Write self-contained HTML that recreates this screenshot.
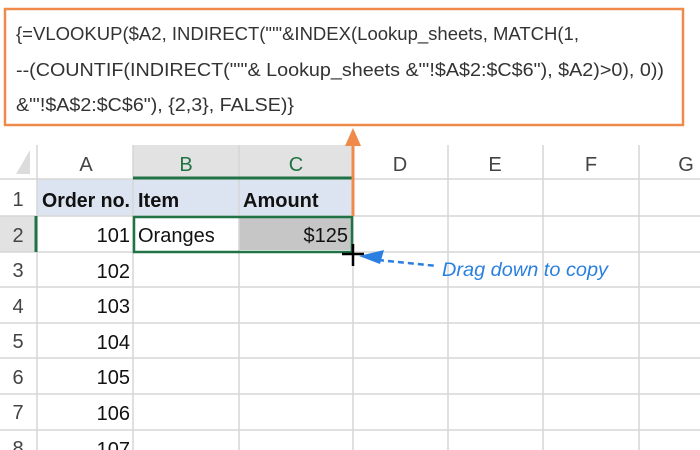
<!DOCTYPE html>
<html><head><meta charset="utf-8"><style>
html,body{margin:0;padding:0;background:#fff;width:700px;height:450px;overflow:hidden}
svg{display:block}
text{font-family:"Liberation Sans",sans-serif}
</style></head><body>
<svg width="700" height="450" viewBox="0 0 700 450">
<rect x="133" y="145" width="220" height="34" fill="#e2e2e2"/>
<rect x="0" y="216" width="37" height="36" fill="#e2e2e2"/>
<rect x="37" y="179" width="316" height="37" fill="#dde4f1"/>
<rect x="239" y="218" width="112" height="32" fill="#c6c6c6"/>
<g stroke="#d6d6d6" stroke-width="1.5">
<line x1="0" y1="179" x2="700" y2="179"/>
<line x1="0" y1="216" x2="700" y2="216"/>
<line x1="0" y1="252" x2="700" y2="252"/>
<line x1="0" y1="287" x2="700" y2="287"/>
<line x1="0" y1="323" x2="700" y2="323"/>
<line x1="0" y1="358" x2="700" y2="358"/>
<line x1="0" y1="394" x2="700" y2="394"/>
<line x1="0" y1="430" x2="700" y2="430"/>
<line x1="37" y1="145" x2="37" y2="450"/>
<line x1="133" y1="145" x2="133" y2="450"/>
<line x1="239" y1="145" x2="239" y2="450"/>
<line x1="353" y1="145" x2="353" y2="450"/>
<line x1="448" y1="145" x2="448" y2="450"/>
<line x1="543" y1="145" x2="543" y2="450"/>
<line x1="639" y1="145" x2="639" y2="450"/>
</g>
<polygon points="30,150 30,174 16,174" fill="#dcdcdc"/>
<line x1="133" y1="178" x2="353" y2="178" stroke="#217346" stroke-width="3"/>
<line x1="36" y1="216" x2="36" y2="252" stroke="#217346" stroke-width="3"/>
<rect x="134" y="217" width="218" height="35" fill="none" stroke="#217346" stroke-width="2.5"/>
<g font-size="20" fill="#444" text-anchor="middle">
<text x="86" y="171">A</text><text x="186" y="171" fill="#217346">B</text><text x="296" y="171" fill="#217346">C</text>
<text x="400" y="171">D</text><text x="495" y="171">E</text><text x="591" y="171">F</text><text x="686" y="171">G</text>
<text x="18" y="206">1</text><text x="18" y="242">2</text><text x="18" y="277">3</text><text x="18" y="313">4</text>
<text x="18" y="348">5</text><text x="18" y="384">6</text><text x="18" y="419">7</text><text x="18" y="455">8</text>
</g>
<g font-size="20" fill="#111">
<text x="42" y="207" font-weight="bold" textLength="88" lengthAdjust="spacingAndGlyphs">Order no.</text>
<text x="138" y="207" font-weight="bold">Item</text>
<text x="243" y="207" font-weight="bold">Amount</text>
<text x="138" y="242">Oranges</text>
<g text-anchor="end">
<text x="348" y="242">$125</text>
<text x="130" y="242">101</text><text x="130" y="278">102</text><text x="130" y="313">103</text>
<text x="130" y="349">104</text><text x="130" y="384">105</text><text x="130" y="420">106</text><text x="130" y="456">107</text>
</g></g>
<path d="M353 244V266M342 254H364" stroke="#000" stroke-width="2.5"/>
<path d="M378 260 L437 266" stroke="#2a7fe0" stroke-width="2.5" stroke-dasharray="6,4"/>
<polygon points="359,256 384,250 380,264" fill="#2a7fe0"/>
<text x="442" y="276" font-size="19" font-style="italic" fill="#2a7fe0" textLength="166" lengthAdjust="spacingAndGlyphs">Drag down to copy</text>
<line x1="353" y1="216" x2="353" y2="138" stroke="#f08a4b" stroke-width="3"/>
<rect x="5" y="9" width="678" height="116" fill="#fff" stroke="#f08a4b" stroke-width="2.5"/>
<polygon points="345,146 353,128 361,146" fill="#f08a4b"/>
<g font-size="18" fill="#333">
<text x="16" y="40" textLength="563" lengthAdjust="spacingAndGlyphs">{=VLOOKUP($A2, INDIRECT("'"&amp;INDEX(Lookup_sheets, MATCH(1,</text>
<text x="16" y="76" textLength="648" lengthAdjust="spacingAndGlyphs">--(COUNTIF(INDIRECT("'"&amp; Lookup_sheets &amp;"'!$A$2:$C$6"), $A2)&gt;0), 0))</text>
<text x="16" y="111" textLength="278" lengthAdjust="spacingAndGlyphs">&amp;"'!$A$2:$C$6"), {2,3}, FALSE)}</text>
</g>
</svg>
</body></html>
